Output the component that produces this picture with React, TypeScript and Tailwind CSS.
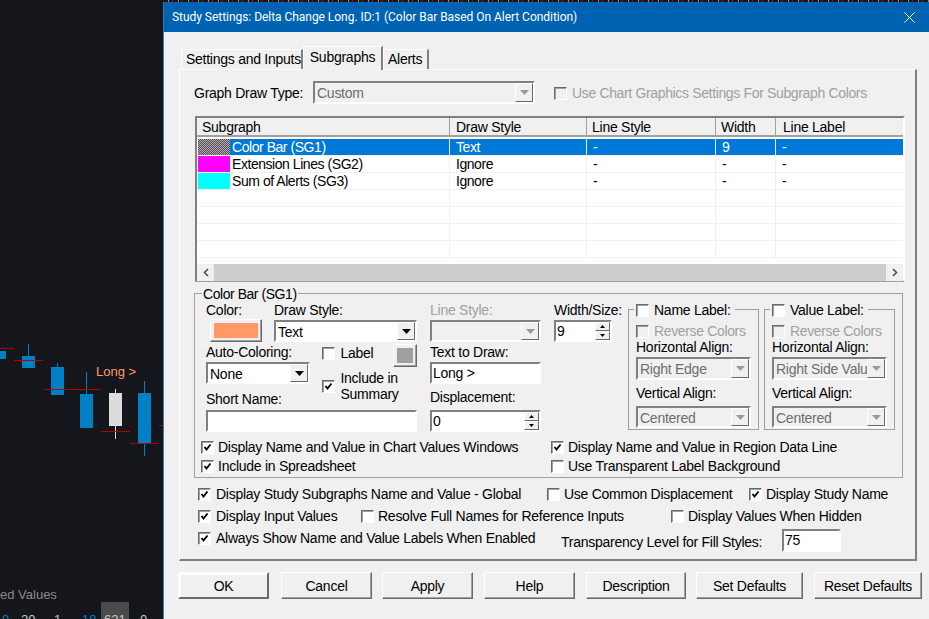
import React from "react";

type CheckProps = {
  label?: string;
  checked?: boolean;
  disabled?: boolean;
  className?: string;
};

const Check = ({ label, checked, disabled, className = "" }: CheckProps) => {
  return (
    <div className={`flex h-4 items-center whitespace-nowrap ${className}`}>
      <div
        className={`flex h-[13px] w-[13px] shrink-0 items-center justify-center border border-t-[#696969] border-l-[#696969] border-r-white border-b-white shadow-[inset_1px_1px_0_#a0a0a0] ${
          disabled ? "bg-[#f0f0f0]" : "bg-white"
        }`}
      >
        {checked && (
          <svg width="9" height="9" viewBox="0 0 9 9">
            <path d="M1.5 4 L3.5 6.5 L7.5 1.5" fill="none" stroke="#000" strokeWidth="1.9" />
          </svg>
        )}
      </div>
      {label && (
        <span className={`ml-[5px] ${disabled ? "tracking-[-0.35px] text-[#a0a0a0]" : ""}`}>{label}</span>
      )}
    </div>
  );
};

const Arrow = ({ disabled }: { disabled?: boolean }) => (
  <div className="flex h-full w-[18px] shrink-0 items-center justify-center border border-t-white border-l-white border-r-[#696969] border-b-[#696969] bg-[#f0f0f0]">
    <svg width="9" height="5" viewBox="0 0 9 5">
      <path d="M0 0 H9 L4.5 5 Z" fill={disabled ? "#9a9a9a" : "#000"} />
    </svg>
  </div>
);

const Combo = ({
  value,
  disabled,
  className = "",
}: {
  value?: string;
  disabled?: boolean;
  className?: string;
}) => {
  return (
    <div
      className={`flex items-stretch border-2 border-t-[#808080] border-l-[#808080] border-r-white border-b-white ${
        disabled ? "bg-[#f0f0f0] text-[#6d6d6d]" : "bg-white text-black"
      } ${className}`}
    >
      <div className="min-w-0 flex-1 overflow-hidden pl-[2px] leading-[20px] whitespace-nowrap">{value}</div>
      <Arrow disabled={disabled} />
    </div>
  );
};

const Input = ({ value, className = "" }: { value?: string; className?: string }) => (
  <div
    className={`h-[22px] border-2 border-t-[#808080] border-l-[#808080] border-r-white border-b-white bg-white pl-px leading-[18px] ${className}`}
  >
    {value}
  </div>
);

const Spinner = ({ value, className = "" }: { value: string; className?: string }) => (
  <div
    className={`flex h-[22px] border-2 border-t-[#808080] border-l-[#808080] border-r-white border-b-white bg-white pl-px leading-[18px] ${className}`}
  >
    <div className="flex-1">{value}</div>
    <div className="flex w-[15px] flex-col">
      {[0, 1].map((i) => (
        <div
          key={i}
          className="flex h-[9px] items-center justify-center border border-t-white border-l-white border-r-[#696969] border-b-[#696969] bg-[#f0f0f0]"
        >
          <svg width="5" height="3" viewBox="0 0 5 3">
            <path d={i === 0 ? "M2.5 0 L5 3 H0 Z" : "M0 0 H5 L2.5 3 Z"} fill="#000" />
          </svg>
        </div>
      ))}
    </div>
  </div>
);

const Label = ({ children, muted }: { children: React.ReactNode; muted?: boolean }) => (
  <div className={`h-4 leading-4 whitespace-nowrap ${muted ? "text-[#a0a0a0]" : ""}`}>{children}</div>
);

const WinButton = ({ children, width, primary }: { children: string; width: string; primary?: boolean }) => (
  <div
    className={`flex h-[27px] items-center justify-center border border-t-white border-l-white pt-px ${
      primary
        ? "border-2 border-[#696969] border-t-[#a8a8a8] border-l-[#a8a8a8] shadow-[inset_1px_1px_0_#fff]"
        : "border-r-[#696969] border-b-[#696969] shadow-[inset_-1px_-1px_0_#a0a0a0]"
    } ${width}`}
  >
    {children}
  </div>
);

const LabelGroup = ({
  title,
  horizontal,
  className = "",
}: {
  title: string;
  horizontal: string;
  className?: string;
}) => (
  <div className={`relative mt-[7px] h-[121px] w-[131px] border border-[#a0a0a0] pl-[7px] ${className}`}>
    <div className="absolute -top-[8px] left-[5px] bg-[#f0f0f0] pr-[4px] pl-[2px]">
      <Check label={title} />
    </div>
    <Check label="Reverse Colors" disabled className="mt-[13px]" />
    <Label>Horizontal Align:</Label>
    <Combo value={horizontal} disabled className="mt-[2px] h-[23px] w-[115px]" />
    <div className="mt-[5px]">
      <Label>Vertical Align:</Label>
    </div>
    <Combo value="Centered" disabled className="mt-[5px] h-[22px] w-[115px]" />
  </div>
);

const tabClass = "flex items-center whitespace-nowrap border-t border-l border-r-2 border-white border-r-[#808080] bg-[#f0f0f0]";

const columns = ["w-[253px]", "w-[137px]", "w-[129px]", "w-[60px]", "w-[127px]"];
const headers = [
  { title: "Subgraph", pad: "pl-[5px]" },
  { title: "Draw Style", pad: "pl-[6px]" },
  { title: "Line Style", pad: "pl-[5px]" },
  { title: "Width", pad: "pl-[5px]" },
  { title: "Line Label", pad: "pl-[7px]" },
];
const rows = [
  { swatch: "bg-[repeating-conic-gradient(#ff9966_0_25%,#0b5fa8_0_50%)] bg-[length:2px_2px]", cells: ["Color Bar (SG1)", "Text", "-", "9", "-"], selected: true },
  { swatch: "bg-[#ff00ff]", cells: ["Extension Lines (SG2)", "Ignore", "-", "-", "-"] },
  { swatch: "bg-[#00ffff]", cells: ["Sum of Alerts (SG3)", "Ignore", "-", "-", "-"] },
  { cells: ["", "", "", "", ""] },
  { cells: ["", "", "", "", ""] },
  { cells: ["", "", "", "", ""] },
  { cells: ["", "", "", "", ""] },
];

const SubgraphList = () => (
  <div className="mt-3 ml-[15px] h-[166px] w-[710px] border-2 border-t-[#808080] border-l-[#808080] border-r-white border-b-[#a0a0a0] bg-white">
    <div className="flex h-[19px] border-b-2 border-[#a0a0a0] bg-[#f0f0f0]">
      {headers.map((h, i) => (
        <div key={h.title} className={`${columns[i]} ${h.pad} shrink-0 border-r border-[#a0a0a0] leading-[18px] last:border-r-0`}>
          {h.title}
        </div>
      ))}
    </div>
    <div className="h-[127px] overflow-hidden pt-[2px] tracking-[-0.45px]">
      {rows.map((row, r) => (
        <div key={r} className="flex h-[17px]">
          {row.cells.map((cell, i) => (
            <div key={i} className={`${columns[i]} flex shrink-0 border-r border-b border-[#f0f0f0] last:border-r-0`}>
              {i === 0 && (
                <div className={`ml-px h-[16px] w-[32px] shrink-0 ${row.swatch ?? ""}`} />
              )}
              <div
                className={`h-[16px] flex-1 pl-[2px] leading-[16px] ${i > 0 ? "pl-[6px]" : ""} ${
                  row.selected ? "bg-[#0078d7] text-white" : ""
                }`}
              >
                {cell}
              </div>
            </div>
          ))}
        </div>
      ))}
    </div>
    <div className="flex h-[17px] w-[706px] bg-[#cdcdcd]">
      <div className="flex w-[17px] items-center justify-center bg-[#f0f0f0]">
        <svg width="6" height="9" viewBox="0 0 6 9">
          <path d="M5 1 L1.5 4.5 L5 8" fill="none" stroke="#505050" strokeWidth="1.6" />
        </svg>
      </div>
      <div className="flex-1" />
      <div className="flex w-[17px] items-center justify-center bg-[#f0f0f0]">
        <svg width="6" height="9" viewBox="0 0 6 9">
          <path d="M1 1 L4.5 4.5 L1 8" fill="none" stroke="#505050" strokeWidth="1.6" />
        </svg>
      </div>
    </div>
  </div>
);

const ColorGroup = () => (
  <div className="relative mt-[11px] ml-[14px] h-[185px] w-[709px] border border-[#a0a0a0]">
    <div className="absolute -top-[8px] left-[7px] bg-[#f0f0f0] px-px leading-4 tracking-[-0.45px]">Color Bar (SG1)</div>
    <div className="flex pt-2 pl-[11px]">
      <div className="w-[211px]">
        <div className="flex">
          <div className="w-[68px]">
            <Label>Color:</Label>
            <div className="mt-px ml-1 flex h-[23px] w-[52px] items-center justify-center border border-t-white border-l-white border-r-[#696969] border-b-[#696969] shadow-[inset_-1px_-1px_0_#a0a0a0]">
              <div className="h-[15px] w-[44px] bg-[#ff9966]" />
            </div>
          </div>
          <div className="w-[143px]">
            <Label>Draw Style:</Label>
            <Combo value="Text" className="mt-[2px] h-[22px]" />
          </div>
        </div>
        <div className="mt-[2px] flex items-start">
          <div className="w-[105px]">
            <Label>Auto-Coloring:</Label>
            <Combo value="None" className="mt-[2px] h-[22px]" />
            <div className="mt-[7px]">
              <Label>Short Name:</Label>
            </div>
          </div>
          <div className="ml-3 w-[95px]">
            <div className="flex h-[23px] items-start justify-between">
              <Check label="Label" className="mt-[1px]" />
              <div className="flex h-[23px] w-[24px] items-center justify-center border border-t-white border-l-white border-r-[#696969] border-b-[#696969] shadow-[inset_-1px_-1px_0_#a0a0a0]">
                <div className="h-[15px] w-[16px] bg-[#a0a0a0]" />
              </div>
            </div>
            <div className="mt-[3px] flex items-center">
              <Check checked />
              <div className="ml-[5px] leading-4">
                Include in
                <br />
                Summary
              </div>
            </div>
          </div>
        </div>
        <Input className="mt-[3px]" />
      </div>
      <div className="ml-[13px] w-[111px]">
        <Label muted>Line Style:</Label>
        <Combo disabled className="mt-[2px] h-[22px]" />
        <div className="mt-[2px]">
          <Label>Text to Draw:</Label>
        </div>
        <Input value="Long >" className="mt-[2px]" />
        <div className="mt-[5px]">
          <Label>Displacement:</Label>
        </div>
        <Spinner value="0" className="mt-[5px]" />
      </div>
      <div className="ml-[13px] w-[74px]">
        <Label>Width/Size:</Label>
        <Spinner value="9" className="mt-[2px] w-[58px]" />
      </div>
      <LabelGroup title="Name Label:" horizontal="Right Edge" />
      <LabelGroup title="Value Label:" horizontal="Right Side Value" className="ml-[5px]" />
    </div>
    <div className="mt-[7px] ml-[6px] flex [&_span]:ml-[4px]">
      <Check checked label="Display Name and Value in Chart Values Windows" className="w-[350px]" />
      <Check checked label="Display Name and Value in Region Data Line" />
    </div>
    <div className="mt-[3px] ml-[6px] flex [&_span]:ml-[4px]">
      <Check checked label="Include in Spreadsheet" className="w-[350px]" />
      <Check label="Use Transparent Label Background" />
    </div>
  </div>
);

const Chart = () => (
  <div className="relative w-[163px] shrink-0 overflow-hidden bg-[#14161b] tracking-normal">
    <svg width="163" height="619" className="absolute inset-0">
      <g fill="#0080c4">
        <rect x="0" y="351" width="6" height="8" />
        <rect x="22" y="356" width="13" height="12" />
        <rect x="28" y="344" width="1" height="12" />
        <rect x="51" y="367" width="13" height="28" />
        <rect x="57" y="363" width="1" height="4" />
        <rect x="80" y="394" width="13" height="34" />
        <rect x="86" y="372" width="1" height="22" />
        <rect x="138" y="393" width="13" height="50" />
        <rect x="144" y="381" width="1" height="75" />
      </g>
      <g fill="#dcdcdc">
        <rect x="109" y="393" width="13" height="33" />
        <rect x="115" y="389" width="1" height="50" />
      </g>
      <g fill="#b00000">
        <rect x="0" y="348" width="14" height="1" />
        <rect x="14" y="360" width="29" height="1" />
        <rect x="43" y="389" width="58" height="1" />
        <rect x="101" y="431" width="29" height="1" />
        <rect x="130" y="443" width="29" height="1" />
        <rect x="159" y="425" width="4" height="1" />
      </g>
    </svg>
    <div className="absolute top-[364px] left-[96px] text-[13px] leading-4 text-[#ff9966]">Long &gt;</div>
    <div className="absolute top-[587px] left-0 text-[13px] leading-4 whitespace-nowrap text-[#8a8a8a]">ed Values</div>
    <div className="absolute top-[602px] left-[101px] h-[17px] w-[28px] bg-[#4a4a4a]" />
    <div className="absolute top-[612px] left-0 flex w-[163px] text-[13px] leading-4 text-[#c8c8c8]">
      <span className="absolute left-[2px] text-[#0080c4]">0</span>
      <span className="absolute left-[21px]">20</span>
      <span className="absolute left-[54px]">1</span>
      <span className="absolute left-[82px] text-[#0080c4]">18</span>
      <span className="absolute left-[104px]">621</span>
      <span className="absolute left-[140px]">0</span>
    </div>
  </div>
);

export default function App() {
  return (
    <div className="flex h-[619px] w-[929px] overflow-hidden bg-[#14161b] font-['Liberation_Sans',Arial,sans-serif] text-[14px] tracking-[-0.26px] text-black">
      <Chart />
      <div className="flex min-w-0 flex-1 flex-col">
        <div className="h-[2px] shrink-0 bg-[repeating-linear-gradient(90deg,#14161b_0_5px,#8a8a8a_5px_6px,#14161b_6px_9px,#b00000_9px_10px)]" />
        <div className="flex flex-1 flex-col border-l border-[#3a78b8] bg-[#f0f0f0]">
          <div className="flex h-[30px] shrink-0 items-center justify-between bg-[#0063b1] pr-[14px] pl-2 font-['Roboto',sans-serif] text-[12px] tracking-[-0.04px] text-white">
            <span>Study Settings: Delta Change Long. ID:1 (Color Bar Based On Alert Condition)</span>
            <svg width="11" height="11" viewBox="0 0 11 11">
              <path d="M0.5 0.5 L10.5 10.5 M10.5 0.5 L0.5 10.5" stroke="#fff" strokeWidth="1" />
            </svg>
          </div>
          <div className="pt-[14px] pl-[15px]">
            <div className="flex h-[23px] items-end pl-[2px]">
              <div className={`${tabClass} h-[20px] w-[122px] pl-[4px]`}>Settings and Inputs</div>
              <div className={`${tabClass} relative z-10 -mb-px h-[24px] w-[80px] justify-center pb-[3px]`}>Subgraphs</div>
              <div className={`${tabClass} h-[20px] w-[46px] pl-1`}>Alerts</div>
            </div>
            <div className="h-[492px] w-[738px] border-t border-l border-white border-r-2 border-b-2 border-r-[#808080] border-b-[#808080]">
              <div className="mt-[11px] flex h-[23px] pl-[14px]">
                <div className="w-[119px] leading-[25px]">Graph Draw Type:</div>
                <Combo value="Custom" disabled className="h-[23px] w-[222px]" />
                <Check label="Use Chart Graphics Settings For Subgraph Colors" disabled className="mt-[4px] ml-[19px]" />
              </div>
              <SubgraphList />
              <ColorGroup />
              <div className="mt-2 ml-[18px] flex">
                <Check checked label="Display Study Subgraphs Name and Value - Global" className="w-[349px]" />
                <Check label="Use Common Displacement" className="w-[202px] [&_span]:ml-[4px]" />
                <Check checked label="Display Study Name" className="[&_span]:ml-[4px]" />
              </div>
              <div className="mt-[6px] ml-[18px] flex">
                <Check checked label="Display Input Values" className="w-[163px]" />
                <Check label="Resolve Full Names for Reference Inputs" className="w-[310px] [&_span]:ml-[4px]" />
                <Check label="Display Values When Hidden" className="[&_span]:ml-[4px]" />
              </div>
              <div className="mt-[6px] ml-[18px] flex items-start">
                <Check checked label="Always Show Name and Value Labels When Enabled" className="w-[363px]" />
                <div className="mt-1 w-[221px] leading-4">Transparency Level for Fill Styles:</div>
                <Input value="75" className="-mt-px h-[23px] w-[59px]" />
              </div>
            </div>
            <div className="-ml-px mt-[11px] flex">
              <WinButton width="w-[91px]" primary>OK</WinButton>
              <div className="w-3" />
              <WinButton width="w-[91px]">Cancel</WinButton>
              <div className="w-[10px]" />
              <WinButton width="w-[91px]">Apply</WinButton>
              <div className="w-[11px]" />
              <WinButton width="w-[91px]">Help</WinButton>
              <div className="w-[11px]" />
              <WinButton width="w-[100px]">Description</WinButton>
              <div className="w-[10px]" />
              <WinButton width="w-[107px]">Set Defaults</WinButton>
              <div className="w-[11px]" />
              <WinButton width="w-[108px]">Reset Defaults</WinButton>
            </div>
          </div>
        </div>
      </div>
    </div>
  );
}
